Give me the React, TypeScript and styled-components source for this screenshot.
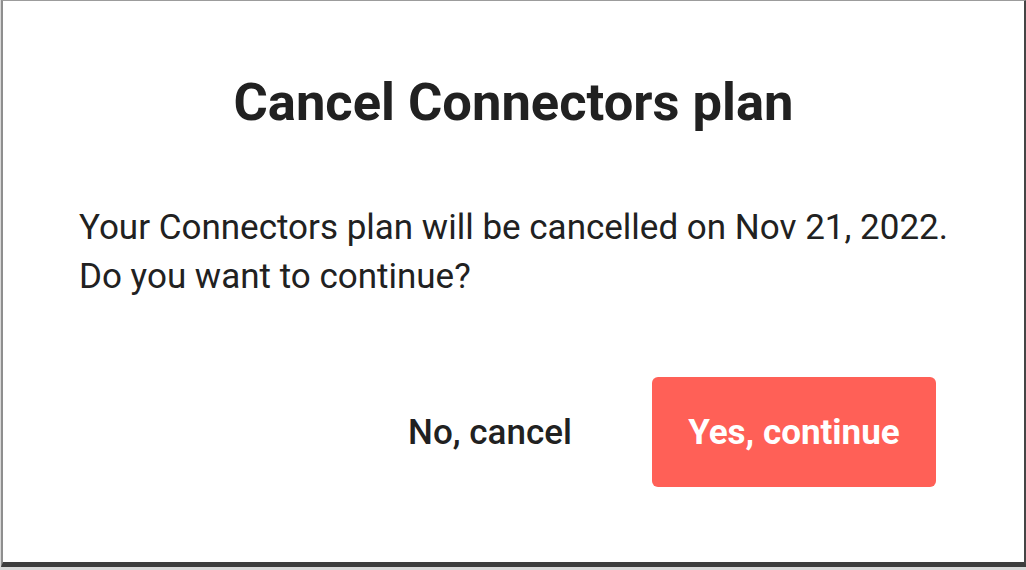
import React from "react";
import styled, { createGlobalStyle } from "styled-components";

const Global = createGlobalStyle`
  html, body { margin: 0; padding: 0; }
  body { background: #d4d4d4; font-family: Roboto, "Noto Sans", sans-serif; }
`;

const Screen = styled.div`
  width: 1026px;
  height: 570px;
  box-sizing: border-box;
  background: #d8d8d8;
  padding: 0 2px 3px 1px;
  display: flex;
`;

const Dialog = styled.div`
  flex: 1;
  box-sizing: border-box;
  background: #ffffff;
  border-top: 1px solid #9c9c9c;
  border-left: 2px solid #8e8e8e;
  border-right: 3px solid #454545;
  border-bottom: 5px solid #3d3d3d;
  padding: 0 76px;
  display: flex;
  flex-direction: column;
  color: #212121;
`;

const Title = styled.h1`
  margin: 71px 0 0;
  font-size: 52.5px;
  font-weight: 700;
  line-height: 60px;
  text-align: center;
`;

const Body = styled.p`
  margin: 71px 0 0;
  font-size: 35px;
  line-height: 49px;
  font-weight: 400;
  white-space: nowrap;
`;

const Actions = styled.div`
  margin-top: 76px;
  padding-right: 12px;
  display: flex;
  justify-content: flex-end;
  gap: 20px;
`;

const Button = styled.button<{ $primary?: boolean }>`
  width: 284px;
  height: 110px;
  border: none;
  border-radius: 6px;
  font-family: Roboto, "Noto Sans", sans-serif;
  font-size: 35px;
  cursor: pointer;
  background: ${(p) => (p.$primary ? "#ff6057" : "transparent")};
  color: ${(p) => (p.$primary ? "#ffffff" : "#212121")};
  font-weight: ${(p) => (p.$primary ? 700 : 500)};
`;

export default function App() {
  return (
    <>
      <Global />
      <Screen>
        <Dialog>
          <Title>Cancel Connectors plan</Title>
          <Body>
            Your Connectors plan will be cancelled on Nov 21, 2022.
            <br />
            Do you want to continue?
          </Body>
          <Actions>
            <Button>No, cancel</Button>
            <Button $primary>Yes, continue</Button>
          </Actions>
        </Dialog>
      </Screen>
    </>
  );
}
